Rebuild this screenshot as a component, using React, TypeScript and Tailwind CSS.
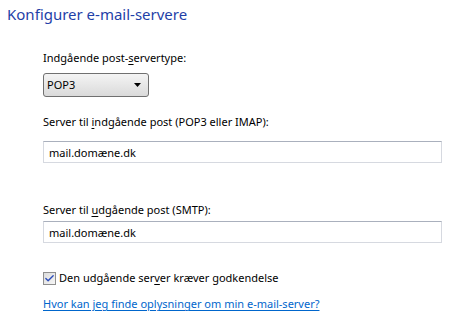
import { Check } from "lucide-react";

const font = { fontFamily: '"Noto Sans", "Open Sans", sans-serif' };

function Key({ children }: { children: string }) {
	return <span className="underline underline-offset-2">{children}</span>;
}

export default function App() {
	return (
		<div className="h-[328px] w-[464px] bg-white text-[11px] text-black" style={font}>
			{/* overskrift */}
			<h1 className="pl-[7px] pt-[3px] text-[15px] leading-[22px] text-[#1f3fa8]">Konfigurer e-mail-servere</h1>

			<div className="flex flex-col pl-[43px] pr-[22px]">
				<label className="mt-[25px] leading-[16px]">
					Indgående post-<Key>s</Key>ervertype:
				</label>
				<div className="mt-[7px] flex h-[24px] w-[106px] items-center justify-between rounded-[3px] border border-[#707070] bg-gradient-to-b from-[#f4f4f4] to-[#dadada] pl-[3px] pr-[7px]">
					<span>POP3</span>
					<svg width="7" height="4" viewBox="0 0 7 4">
						<path d="M0 0h7L3.5 4z" fill="#000" />
					</svg>
				</div>

				<label className="mt-[17px] leading-[16px]">
					Server til <Key>i</Key>ndgående post (POP3 eller IMAP):
				</label>
				<input
					readOnly
					value="mail.domæne.dk"
					className="mt-[11px] h-[22px] w-full border border-[#d6d9e0] border-t-[#aab0bd] px-[5px] text-[11px] outline-none"
					style={font}
				/>

				<label className="mt-[39px] leading-[16px]">
					Server til <Key>u</Key>dgående post (SMTP):
				</label>
				<input
					readOnly
					value="mail.domæne.dk"
					className="mt-[3px] h-[22px] w-full border border-[#d6d9e0] border-t-[#aab0bd] px-[5px] text-[11px] outline-none"
					style={font}
				/>

				<div className="mt-[27px] flex items-center gap-[3px] leading-[16px]">
					<span className="flex size-[13px] items-center justify-center border border-[#8f8f8f] bg-gradient-to-br from-[#dcdcdc] to-[#f6f6f6]">
						<Check className="size-[11px] text-[#2c4dbb]" strokeWidth={3} />
					</span>
					<span>
						Den udgående ser<Key>v</Key>er kræver godkendelse
					</span>
				</div>

				<a href="#" className="mt-[10px] self-start leading-[16px] text-[#0066cc] underline underline-offset-2">
					Hvor kan jeg finde oplysninger om min e-mail-server?
				</a>
			</div>
		</div>
	);
}
